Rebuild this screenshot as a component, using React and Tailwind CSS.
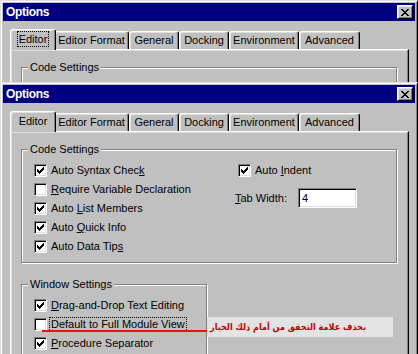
import React from 'react';

const raised =
  'border border-t-white border-l-white border-b-black border-r-black shadow-[inset_1px_1px_#dfdfdf,inset_-1px_-1px_#808080]';

const CheckMark = () => (
  <svg width="7" height="7" viewBox="0 0 7 7" shapeRendering="crispEdges">
    <rect x="0" y="2" width="1" height="3" fill="#000" />
    <rect x="1" y="3" width="1" height="3" fill="#000" />
    <rect x="2" y="4" width="1" height="3" fill="#000" />
    <rect x="3" y="3" width="1" height="3" fill="#000" />
    <rect x="4" y="2" width="1" height="3" fill="#000" />
    <rect x="5" y="1" width="1" height="3" fill="#000" />
    <rect x="6" y="0" width="1" height="3" fill="#000" />
  </svg>
);

const CloseGlyph = () => (
  <svg width="8" height="7" viewBox="0 0 8 7" shapeRendering="crispEdges">
    <path
      d="M0 0h2v1h-2zM6 0h2v1h-2zM1 1h2v1h-2zM5 1h2v1h-2zM2 2h4v1h-4zM3 3h2v1h-2zM2 4h4v1h-4zM1 5h2v1h-2zM5 5h2v1h-2zM0 6h2v1h-2zM6 6h2v1h-2z"
      fill="#000"
    />
  </svg>
);

const Checkbox = ({ checked }) => (
  <span className="w-[13px] h-[13px] shrink-0 bg-white border border-t-[#808080] border-l-[#808080] border-b-white border-r-white shadow-[inset_1px_1px_#000,inset_-1px_-1px_#dfdfdf] flex items-center justify-center">
    {checked && <CheckMark />}
  </span>
);

// label with one access-key letter underlined
const Label = ({ text, k }) => {
  if (k == null) return <span>{text}</span>;
  return (
    <span>
      {text.slice(0, k)}
      <span className="underline underline-offset-[1px]">{text[k]}</span>
      {text.slice(k + 1)}
    </span>
  );
};

const Row = ({ checked, text, k, focus }) => (
  <div className="flex items-center h-[19px] gap-[4px]">
    <Checkbox checked={checked} />
    <span className={focus ? 'outline outline-1 outline-dotted outline-black px-[1px] -ml-[1px] leading-[13px]' : ''}>
      <Label text={text} k={k} />
    </span>
  </div>
);

const Group = ({ title, className, children }) => (
  <div className={`relative border border-[#808080] shadow-[inset_1px_1px_#fff,1px_1px_#fff] ${className}`}>
    <span className="absolute left-[6px] -top-[8px] px-[2px] bg-[#c0c0c0] leading-[14px]">{title}</span>
    {children}
  </div>
);

const tabs = [
  { name: 'Editor', w: 'w-[42px]' },
  { name: 'Editor Format', w: 'w-[75px]' },
  { name: 'General', w: 'w-[50px]' },
  { name: 'Docking', w: 'w-[50px]' },
  { name: 'Environment', w: 'w-[70px]' },
  { name: 'Advanced', w: 'w-[61px]' },
];

const tabEdge =
  'border-t border-l border-r border-t-white border-l-white border-r-black rounded-t-[3px] shadow-[inset_-1px_0_#808080,inset_1px_1px_#dfdfdf] flex items-center justify-center';

const Dialog = ({ tabFocus }) => (
  <div className="h-[300px] flex flex-col bg-[#c0c0c0] p-[2px] border border-t-[#dfdfdf] border-l-[#dfdfdf] border-b-black border-r-black shadow-[inset_1px_1px_#fff,inset_-1px_-1px_#808080]">
    <div className="h-[18px] shrink-0 bg-[#000080] flex items-center justify-between pl-[3px] pr-[2px]">
      <span className="text-white font-bold text-[12px] tracking-[-0.3px]">Options</span>
      <span className={`w-[16px] h-[14px] bg-[#c0c0c0] flex items-center justify-center ${raised}`}>
        <CloseGlyph />
      </span>
    </div>

    <div className="pl-[7px] pr-[6px] pt-[8px] flex flex-col">
      <div className="relative z-10 flex items-end h-[21px] pl-[2px]">
        {tabs.map((t, i) =>
          i === 0 ? (
            <div key={t.name} className={`w-[46px] -mx-[2px] h-[21px] bg-[#c0c0c0] relative z-10 pb-[2px] ${tabEdge}`}>
              <span className={tabFocus ? 'outline outline-1 outline-dotted outline-black px-[1px] leading-[14px]' : ''}>
                {t.name}
              </span>
            </div>
          ) : (
            <div key={t.name} className={`${t.w} h-[18px] mb-[1px] ${tabEdge}`}>
              {t.name}
            </div>
          )
        )}
      </div>

      <div className="-mt-[1px] h-[240px] border-t border-l border-r border-t-white border-l-white border-r-black shadow-[inset_-1px_0_#808080,inset_1px_1px_#dfdfdf] pl-[10px] pt-[17px]">
        <Group title="Code Settings" className="w-[376px] pt-[11px] pl-[12px] pb-[6px]">
          <div className="flex">
            <div className="w-[204px]">
              <Row checked text="Auto Syntax Check" k={16} />
              <Row text="Require Variable Declaration" k={0} />
              <Row checked text="Auto List Members" k={5} />
              <Row checked text="Auto Quick Info" k={5} />
              <Row checked text="Auto Data Tips" k={13} />
            </div>
            <div>
              <Row checked text="Auto Indent" k={5} />
              <div className="flex items-center mt-[8px] -ml-[3px]">
                <span className="w-[63px]">
                  <Label text="Tab Width:" k={0} />
                </span>
                <span className="w-[59px] h-[20px] bg-white border border-t-[#808080] border-l-[#808080] border-b-white border-r-white shadow-[inset_1px_1px_#000,inset_-1px_-1px_#dfdfdf] flex items-center pl-[3px]">
                  4
                </span>
              </div>
            </div>
          </div>
        </Group>

        <Group title="Window Settings" className="w-[186px] mt-[21px] pt-[11px] pl-[12px] pb-[6px]">
          <Row checked text="Drag-and-Drop Text Editing" k={0} />
          <Row text="Default to Full Module View" focus />
          <Row checked text="Procedure Separator" k={0} />
        </Group>
      </div>
    </div>
  </div>
);

export default function App() {
  return (
    <div className="relative w-[418px] h-[354px] overflow-hidden bg-[#c0c0c0] text-black text-[11px] font-['Liberation_Sans',Arial,sans-serif] flex flex-col">
      <div className="h-[82px] shrink-0 overflow-hidden">
        <Dialog tabFocus />
      </div>
      <div className="flex-1 overflow-hidden">
        <Dialog />
      </div>

      {/* annotation overlay */}
      <div className="absolute left-[42px] top-[330px] w-[168px] h-[2px] bg-[#e01818]" />
      <div className="absolute left-[207px] top-[317px] w-[186px] h-[20px] bg-[#e3e3e3] flex items-center pl-[3px]">
        <span dir="rtl" className="whitespace-nowrap text-[#c00000] font-bold text-[9px] leading-[12px] font-['DejaVu_Sans_Condensed','DejaVu_Sans',sans-serif]">
          بحذف علامة التحقق من أمام ذلك الخيار
        </span>
      </div>
    </div>
  );
}
